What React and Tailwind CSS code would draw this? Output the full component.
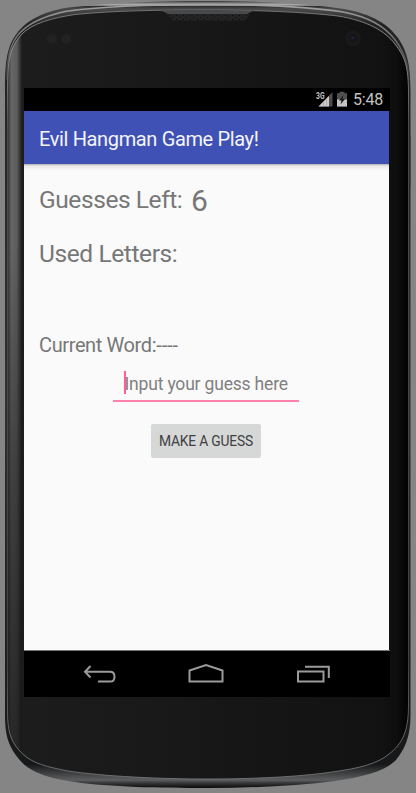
import React from "react";

const OUTER =
  "M5 90 C5 62 7 48 15 36 C24 22 40 13 62 8.5 C100 3.5 150 1 208 1 C260 1 310 4 344 9 C372 14 388 24 398 38 C407 51 410.500 64 410.500 92 L410.500 715 C410.500 738 404 750 396 760 C384 772 362 777 335 781 C295 786 250 788 208 788 C160 788 110 787 75 782 C45 778 28 771 18 758 C8 745 5 735 5 715 Z";
const INNER =
  "M7.500 92 C7.500 58 10 48 21 35 C32 23 52 18 75 14.500 C115 10.500 160 10 208 10 C255 10 305 12 338 16 C368 21 385 31 395 44 C405 57 408.500 66 408.500 94 L408.500 705 C408.500 732 402 744 389 754 C376 765 355 769 325 773 C290 777.500 245 779 208 779 C160 779 105 776.500 68 771 C42 766 29 762 19 750 C10 740 7.500 730 7.500 710 Z";

function Device() {
  return (
    <svg className="absolute inset-0" width="416" height="793" viewBox="0 0 416 793" aria-hidden="true">
      <defs>
        <linearGradient id="rim" x1="0" y1="0" x2="0" y2="1">
          <stop offset="0" stopColor="#333" />
          <stop offset="0.003" stopColor="#888" />
          <stop offset="0.005" stopColor="#b4b4b4" />
          <stop offset="0.007" stopColor="#303030" />
          <stop offset="0.010" stopColor="#4a4a4a" />
          <stop offset="0.03" stopColor="#222" />
          <stop offset="0.5" stopColor="#303030" />
          <stop offset="0.97" stopColor="#171819" />
          <stop offset="0.990" stopColor="#5c5e5f" />
          <stop offset="0.993" stopColor="#3c3e3f" />
          <stop offset="1" stopColor="#080808" />
        </linearGradient>
        <linearGradient id="face" x1="0" y1="0" x2="1" y2="0">
          <stop offset="0" stopColor="#1d1d1d" />
          <stop offset="0.93" stopColor="#121212" />
          <stop offset="0.97" stopColor="#0e0e0e" />
          <stop offset="1" stopColor="#020202" />
        </linearGradient>
        <linearGradient id="side" x1="0" y1="0" x2="1" y2="0">
          <stop offset="0" stopColor="#2c2c2c" />
          <stop offset="0.3" stopColor="#666" />
          <stop offset="0.65" stopColor="#5c5c5c" />
          <stop offset="0.85" stopColor="#383838" />
          <stop offset="1" stopColor="#1b1b1b" />
        </linearGradient>
        <linearGradient id="shade" x1="0" y1="0" x2="0" y2="1">
          <stop offset="0.3" stopColor="#161616" stopOpacity="0" />
          <stop offset="0.6" stopColor="#161616" stopOpacity="0.45" />
          <stop offset="1" stopColor="#161616" stopOpacity="0.8" />
        </linearGradient>
        <linearGradient id="edge" x1="0" y1="0" x2="0" y2="1">
          <stop offset="0" stopColor="#77797c" />
          <stop offset="0.05" stopColor="#a0a0a0" />
          <stop offset="0.15" stopColor="#505050" />
          <stop offset="0.85" stopColor="#484848" />
          <stop offset="0.95" stopColor="#707070" />
          <stop offset="1" stopColor="#747677" />
        </linearGradient>
        <linearGradient id="gloss" x1="0" y1="0" x2="0" y2="80" gradientUnits="userSpaceOnUse">
          <stop offset="0" stopColor="#aaa" />
          <stop offset="0.3" stopColor="#858585" />
          <stop offset="1" stopColor="#333" />
        </linearGradient>
        <pattern id="mesh" x="168" y="15" width="7" height="4" patternUnits="userSpaceOnUse">
          <rect width="7" height="4" fill="#232323" />
          <rect x="1" y="0" width="1" height="1" fill="#0b0b0b" />
          <rect x="4" y="2" width="1" height="1" fill="#0b0b0b" />
        </pattern>
        <clipPath id="faceClip"><path d={INNER} /></clipPath>
      </defs>
      <path d={OUTER} fill="url(#rim)" />
      <path d="M6.500 80 C7 58 10 45 18 35 C27 24 45 16 65 11.500 C100 6.500 150 4.500 208 4.500 C260 4.500 310 7 343 12 C370 17 386 27 396 41 C404 53 408 62 409 80" fill="none" stroke="url(#gloss)" strokeWidth="1.600" />
      <path d={INNER} fill="url(#face)" />
      <g clipPath="url(#faceClip)">
        <rect x="7" y="20" width="15" height="745" fill="url(#side)" />
        <rect x="7" y="20" width="15" height="745" fill="url(#shade)" />
      </g>
      <path d={INNER} fill="none" stroke="url(#edge)" strokeWidth="0.900" />
      <path d="M410 135 V187" stroke="#333" strokeWidth="1" />
      <path d="M161 10.500 H254 L247 14 H168 Z" fill="#48494a" />
      <path d="M166 14 H250 L245 20.500 H173 Z" fill="url(#mesh)" />
      <circle cx="51.500" cy="39" r="5" fill="#222" />
      <circle cx="66" cy="39" r="5" fill="#222" />
      <circle cx="353" cy="38.500" r="8" fill="#191919" />
      <circle cx="353" cy="38.500" r="4.500" fill="#15151d" />
      <circle cx="352.500" cy="38" r="1.300" fill="#25253e" />
    </svg>
  );
}

function StatusBar() {
  return (
    <div className="flex h-[23px] w-[366px] shrink-0 items-center justify-end bg-black pr-[7px] text-[#c4c4c4]">
      <svg width="18" height="17" viewBox="0 0 18 17" className="mr-[3px]">
        <path d="M3.500 15.500 L17.500 1 V15.500 Z" fill="#4d4d4d" />
        <path d="M3.500 15.500 L14 5 V15.500 Z" fill="#cbcbcb" />
        <path d="M8.500 10 V15.500 M11.500 8 V15.500" stroke="#999" strokeWidth="0.500" />
        <text x="1" y="7.500" fontSize="9" fontWeight="700" fontFamily="Roboto, sans-serif" fill="#c4c4c4" stroke="#000" strokeWidth="1" paintOrder="stroke" textLength="8.500" lengthAdjust="spacingAndGlyphs">3G</text>
      </svg>
      <svg width="12" height="17" viewBox="0 0 12 17" className="mr-[5px]">
        <path d="M3.500 0.800 H8.500 V2.300 H11 V15.500 H1 V2.300 H3.500 Z" fill="#505050" />
        <path d="M1 8.500 H11 V15.500 H1 Z" fill="#c4c4c4" />
        <path d="M7.500 4 L3 9.500 H5.500 L4.500 13.500 L9 8 H6.500 Z" fill="#181818" />
      </svg>
      <span className="pt-px text-[16px] leading-none tracking-[-0.2px]">5:48</span>
    </div>
  );
}

function NavigationBar() {
  return (
    <div className="h-[47px] w-[366px] shrink-0 border-t border-[#777] bg-black">
      <svg width="366" height="46" viewBox="24 651 366 46" fill="none" stroke="#9b9b9b" strokeWidth="2">
        <path d="M90.500 666 L85 671.800 L90.500 677.500 M85 671.800 H110 Q114.500 671.800 114.500 676.700 Q114.500 681.600 110 681.600 H98" />
        <path d="M189.500 681.500 V670.500 L206 665 L222.500 670.500 V681.500 Z" />
        <path d="M298 671.500 H323.500 V681.500 H298 Z M305 666.700 H328.800 V678" />
      </svg>
    </div>
  );
}

export default function App() {
  return (
    <div className="relative h-[793px] w-[416px] overflow-hidden bg-[#858585] font-['Roboto',sans-serif] text-[#777]">
      <Device />
      <main className="relative flex h-full flex-col pt-[88px] pl-6">
        <StatusBar />
        <header className="flex h-[53px] w-[365px] shrink-0 items-center bg-[#3f51b5] pt-[2px] pl-[15px] text-[20px] tracking-[-0.36px] whitespace-nowrap text-[#f4f5fc]">
          Evil Hangman Game Play!
        </header>
        <section className="flex h-[486px] w-[365px] shrink-0 flex-col bg-[#fafafa]">
          <div className="h-1.5 shrink-0 bg-linear-to-b from-[#aaa] via-[#e6e6e6] via-30% to-[#fafafa]" />
          <div className="flex h-[59px] items-center pl-[15px] whitespace-nowrap">
            <span className="w-[144px] pt-px text-[24.5px] tracking-[-0.42px]">Guesses Left:</span>
            <span className="ml-[8px] pt-px text-[30px]">6</span>
          </div>
          <div className="flex h-[50px] items-center pl-[15px] text-[24.5px] tracking-[-0.4px] whitespace-nowrap">Used Letters:</div>
          <div className="mt-[52px] flex h-[28px] items-center pl-[15px] text-[20px] tracking-[-0.38px] whitespace-nowrap">
            Current Word:<span className="tracking-[-0.1px]">----</span>
          </div>
          <div className="ml-[89px] flex h-[43px] w-[186px] items-end border-b-2 border-[#ff80ab] pb-[6px] pl-[10.5px]">
            <span className="mr-[-1px] h-[23px] w-[2px] bg-[#ff6090]" />
            <span className="relative top-px text-[17.5px] leading-[22px] tracking-[-0.18px] whitespace-nowrap text-[#808080]">Input your guess here</span>
          </div>
          <button className="mt-[22px] ml-[127px] h-[34px] w-[110px] rounded-[2px] bg-[#d6d7d7] pt-px text-[13.8px] tracking-[-0.17px] whitespace-nowrap text-[#404040]">
            MAKE A GUESS
          </button>
        </section>
        <NavigationBar />
      </main>
    </div>
  );
}
